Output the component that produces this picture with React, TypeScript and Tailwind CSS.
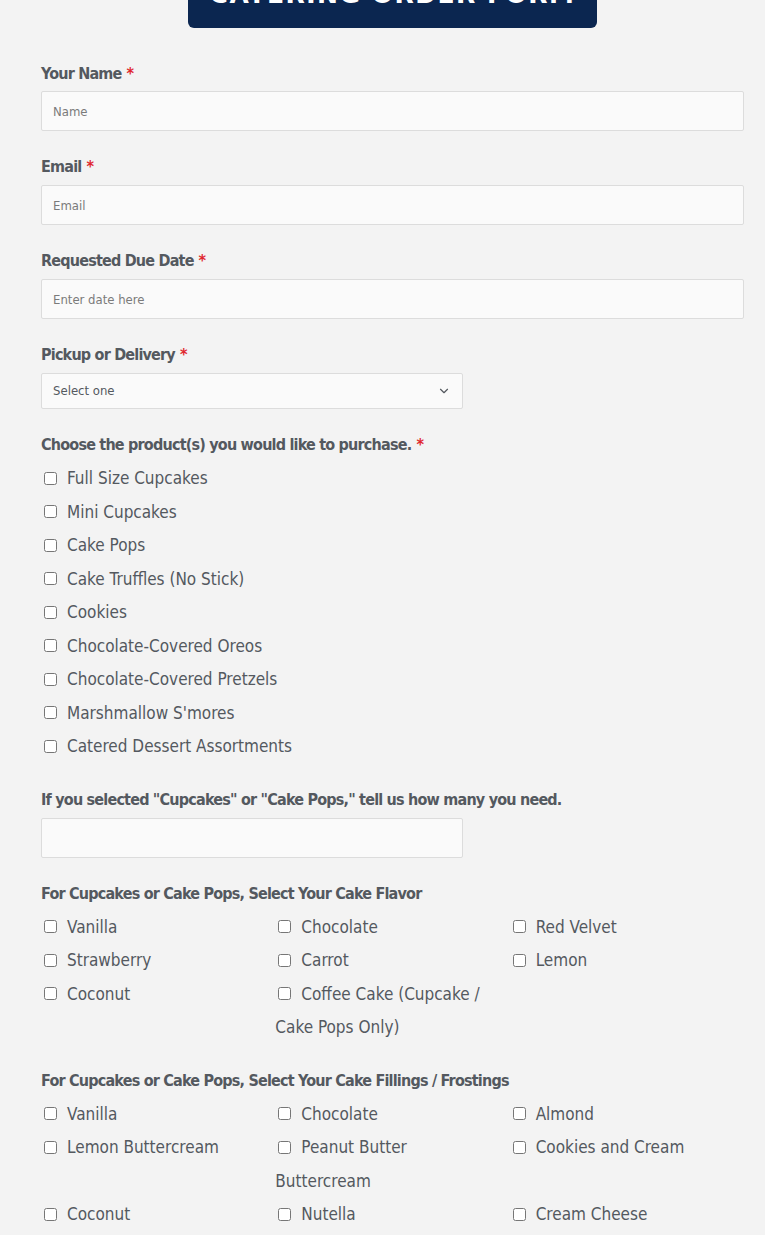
import React from 'react';
import { ChevronDown } from 'lucide-react';

const font = { fontFamily: '"Liberation Sans Narrow", "DejaVu Sans Condensed", "Roboto Condensed", sans-serif' };

const products = [
  'Full Size Cupcakes',
  'Mini Cupcakes',
  'Cake Pops',
  'Cake Truffles (No Stick)',
  'Cookies',
  'Chocolate-Covered Oreos',
  'Chocolate-Covered Pretzels',
  "Marshmallow S'mores",
  'Catered Dessert Assortments',
];

const flavors = ['Vanilla', 'Chocolate', 'Red Velvet', 'Strawberry', 'Carrot', 'Lemon', 'Coconut', 'Coffee Cake (Cupcake / Cake Pops Only)'];

const fillings = [
  'Vanilla',
  'Chocolate',
  'Almond',
  'Lemon Buttercream',
  'Peanut Butter Buttercream',
  'Cookies and Cream',
  'Coconut',
  'Nutella',
  'Cream Cheese',
];

const Label: React.FC<{ text: string; required?: boolean; className?: string }> = ({ text, required, className }) => (
  <label className={`block text-[16px] font-bold leading-[24px] tracking-[-0.8px] text-[#54595f] ${className ?? ''}`}>
    {text}
    {required && <span className="ml-[5px] text-[#e0272f]">*</span>}
  </label>
);

const Check: React.FC<{ text: string }> = ({ text }) => (
  <label className="block pr-[20px] text-[17px] leading-[33.5px] tracking-[0px] text-[#54595f]">
    <input
      type="checkbox"
      className="relative top-[-1px] ml-[3px] mr-[10px] inline-block h-[13px] w-[13px] align-middle"
    />
    {text}
  </label>
);

const TextField: React.FC<{ placeholder: string; wide?: boolean }> = ({ placeholder, wide = true }) => (
  <input
    type="text"
    placeholder={placeholder}
    className={`block h-[40px] rounded-[2px] border border-[#dcdcdc] bg-[#fafafa] px-[11px] text-[13px] text-[#54595f] placeholder:text-[#7a7a7a] ${wide ? 'w-full' : 'w-[422px]'}`}
    style={font}
  />
);

export default function App() {
  return (
    <div className="min-h-[1235px] overflow-hidden bg-[#f3f3f3] pl-[41px] pr-[21px]" style={font}>
      <div className="flex justify-center">
        <div className="-mt-[52px] flex h-[80px] w-[409px] items-end justify-center overflow-hidden rounded-[6px] bg-[#0b2650] pb-[21px]">
          <span
            className="whitespace-nowrap text-[25px] font-bold leading-none tracking-[1.5px] text-white"
            style={{ fontFamily: '"DejaVu Sans", sans-serif' }}
          >
            CATERING ORDER FORM
          </span>
        </div>
      </div>

      <div className="pt-[34px]">
        <div className="mb-[24px]">
          <Label text="Your Name" required className="mb-[5px]" />
          <TextField placeholder="Name" />
        </div>

        <div className="mb-[24px]">
          <Label text="Email" required className="mb-[6px]" />
          <TextField placeholder="Email" />
        </div>

        <div className="mb-[24px]">
          <Label text="Requested Due Date" required className="mb-[6px]" />
          <TextField placeholder="Enter date here" />
        </div>

        <div className="mb-[24px]">
          <Label text="Pickup or Delivery" required className="mb-[6px]" />
          <div className="flex h-[36px] w-[422px] items-center justify-between rounded-[2px] border border-[#dcdcdc] bg-[#fafafa] pl-[11px] pr-[11px] text-[13px] text-[#54595f]">
            <span>Select one</span>
            <ChevronDown className="h-[14px] w-[14px] text-[#54595f]" strokeWidth={2} />
          </div>
        </div>

        <div className="mb-[24px]">
          <Label text="Choose the product(s) you would like to purchase." required className="mb-[5px]" />
          {products.map((p) => (
            <Check key={p} text={p} />
          ))}
        </div>

        <div className="mb-[24px]">
          <Label text={'If you selected "Cupcakes" or "Cake Pops," tell us how many you need.'} className="mb-[6px]" />
          <TextField placeholder="" wide={false} />
        </div>

        <div className="mb-[24px]">
          <Label text="For Cupcakes or Cake Pops, Select Your Cake Flavor" className="mb-[5px]" />
          <div className="grid grid-cols-3">
            {flavors.map((f) => (
              <Check key={f} text={f} />
            ))}
          </div>
        </div>

        <div className="mb-[24px]">
          <Label text="For Cupcakes or Cake Pops, Select Your Cake Fillings / Frostings" className="mb-[5px]" />
          <div className="grid grid-cols-3">
            {fillings.map((f) => (
              <Check key={f} text={f} />
            ))}
          </div>
        </div>
      </div>
    </div>
  );
}
